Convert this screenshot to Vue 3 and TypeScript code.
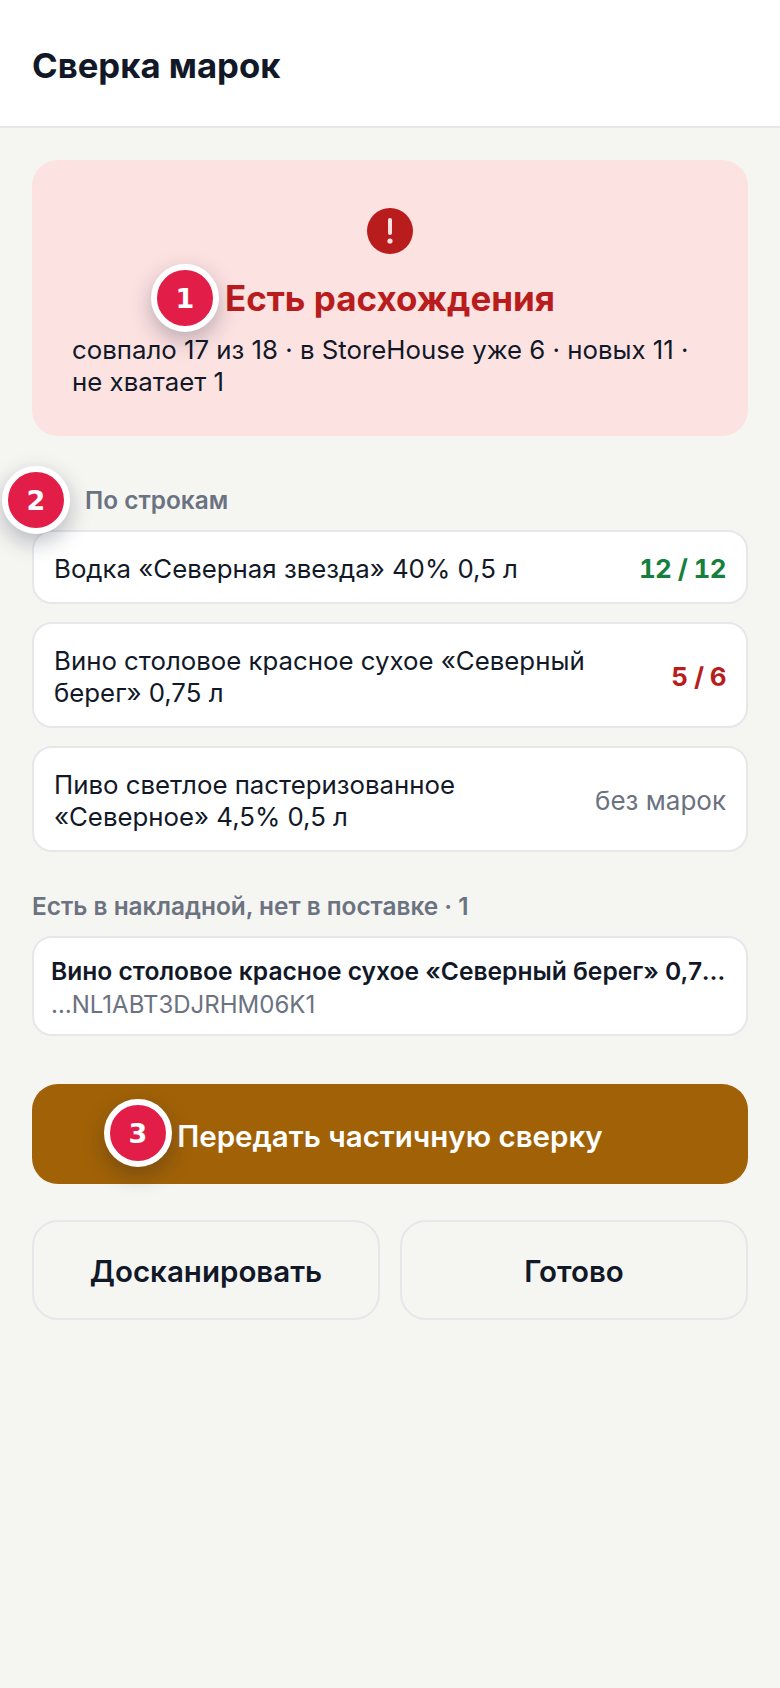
<template>
  <div class="screen">
    <header class="topbar">
      <h1 class="topbar-title">Сверка марок</h1>
    </header>

    <main class="content">
      <section class="alert">
        <svg class="alert-icon" viewBox="0 0 46 46" aria-hidden="true">
          <circle cx="23" cy="23" r="23" fill="#b91c1c" />
          <rect x="21" y="10" width="4" height="17" rx="2" fill="#fde2e2" />
          <circle cx="23" cy="33" r="2.6" fill="#fde2e2" />
        </svg>
        <div class="alert-title">
          Есть расхождения
          <span class="badge badge-one">1</span>
        </div>
        <p class="alert-text">совпало 17 из 18 · в StoreHouse уже 6 · новых 11 · не хватает 1</p>
      </section>

      <div class="section-label section-label-rows">
        По строкам
        <span class="badge badge-two">2</span>
      </div>
      <div class="rows">
        <div v-for="row in rows" :key="row.name" class="row">
          <span class="row-name">{{ row.name }}</span>
          <span class="row-count" :class="row.tone">{{ row.count }}</span>
        </div>
      </div>

      <div class="section-label section-label-missing">Есть в накладной, нет в поставке · 1</div>
      <div class="missing">
        <div class="missing-name">Вино столовое красное сухое «Северный берег» 0,75 л</div>
        <div class="missing-code">…NL1ABT3DJRHM06K1</div>
      </div>

      <button class="btn-primary" type="button">
        Передать частичную сверку
        <span class="badge badge-three">3</span>
      </button>

      <div class="actions">
        <button class="btn-secondary" type="button">Досканировать</button>
        <button class="btn-secondary" type="button">Готово</button>
      </div>
    </main>
  </div>
</template>

<script setup lang="ts">
interface Row {
  name: string
  count: string
  tone: 'ok' | 'bad' | 'none'
}

const rows: Row[] = [
  { name: 'Водка «Северная звезда» 40% 0,5 л', count: '12 / 12', tone: 'ok' },
  { name: 'Вино столовое красное сухое «Северный берег» 0,75 л', count: '5 / 6', tone: 'bad' },
  { name: 'Пиво светлое пастеризованное «Северное» 4,5% 0,5 л', count: 'без марок', tone: 'none' },
]
</script>

<style>
html,
body {
  margin: 0;
  background: #f5f5f2;
}
</style>

<style scoped>
.screen {
  min-height: 1688px;
  background: #f5f5f2;
  font-family: Inter, 'Noto Sans', sans-serif;
  color: #111827;
}

.topbar {
  height: 122px;
  background: #fff;
  border-bottom: 2px solid #e5e7eb;
  padding: 4px 32px 0;
  display: flex;
  align-items: center;
}

.topbar-title {
  margin: 0;
  font-size: 34.7px;
  font-weight: 700;
  color: #111827;
}

.content {
  padding: 32px 32px 0;
  display: flex;
  flex-direction: column;
}

.alert {
  height: 276px;
  box-sizing: border-box;
  background: #fde2e2;
  border-radius: 26px;
  padding: 48px 40px 0;
  display: flex;
  flex-direction: column;
  align-items: center;
}

.alert-icon {
  width: 46px;
  height: 46px;
  display: block;
}

.alert-title {
  position: relative;
  margin-top: 22px;
  font-size: 35px;
  line-height: 44px;
  font-weight: 700;
  color: #b91c1c;
}

.alert-text {
  margin: 14px 0 0;
  width: 100%;
  font-size: 25.8px;
  line-height: 32px;
}

.section-label {
  position: relative;
  font-size: 24.4px;
  line-height: 28px;
  font-weight: 600;
  color: #6b7280;
}

.section-label-rows {
  margin-top: 50px;
  padding-left: 53px;
}

.section-label-missing {
  margin-top: 40px;
}

.rows {
  display: flex;
  flex-direction: column;
  gap: 18px;
  margin-top: 16px;
}

.row {
  background: #fff;
  border: 2px solid #e5e7eb;
  border-radius: 20px;
  padding: 21px 20px 17px;
  display: flex;
  align-items: center;
  justify-content: space-between;
  gap: 32px;
  font-size: 25.8px;
  line-height: 32px;
}

.row-count {
  flex: none;
  font-size: 26px;
}

.ok,
.bad {
  font-weight: 700;
  font-variant-numeric: tabular-nums;
  letter-spacing: -0.6px;
}

.ok {
  color: #15803d;
}

.bad {
  color: #b91c1c;
}

.none {
  color: #6b7280;
}

.missing {
  box-sizing: border-box;
  height: 100px;
  margin-top: 16px;
  background: #fff;
  border: 2px solid #e5e7eb;
  border-radius: 20px;
  padding: 0 17px;
  display: flex;
  flex-direction: column;
  justify-content: center;
}

.missing-name {
  font-size: 24.6px;
  line-height: 34px;
  font-weight: 600;
  white-space: nowrap;
  overflow: hidden;
  text-overflow: ellipsis;
}

.missing-code {
  margin-top: 3px;
  font-size: 24px;
  line-height: 28px;
  color: #6b7280;
}

.btn-primary,
.btn-secondary {
  font-family: inherit;
  cursor: pointer;
}

.btn-primary {
  position: relative;
  height: 100px;
  margin-top: 48px;
  padding: 4px 0 0;
  border: 0;
  border-radius: 26px;
  background: #a16207;
  color: #fff;
  font-size: 29.5px;
  font-weight: 600;
}

.actions {
  display: grid;
  grid-template-columns: 1fr 1fr;
  gap: 20px;
  margin-top: 36px;
}

.btn-secondary {
  height: 100px;
  padding: 2px 0 0;
  background: transparent;
  border: 2px solid #e5e7eb;
  border-radius: 26px;
  color: #111827;
  font-size: 29.5px;
  font-weight: 600;
}

.badge {
  position: absolute;
  box-sizing: border-box;
  width: 68px;
  height: 68px;
  border-radius: 50%;
  background: #e11d48;
  border: 6px solid #fff;
  box-shadow: 0 8px 22px rgba(15, 23, 42, 0.28);
  color: #fff;
  font-family: 'DejaVu Sans', sans-serif;
  font-size: 27px;
  font-weight: 700;
  line-height: 1;
  display: flex;
  align-items: center;
  justify-content: center;
}

.badge-one {
  left: -74px;
  top: -12px;
}

.badge-two {
  left: -30px;
  top: -20px;
}

.badge-three {
  left: 72px;
  top: 15px;
}
</style>
